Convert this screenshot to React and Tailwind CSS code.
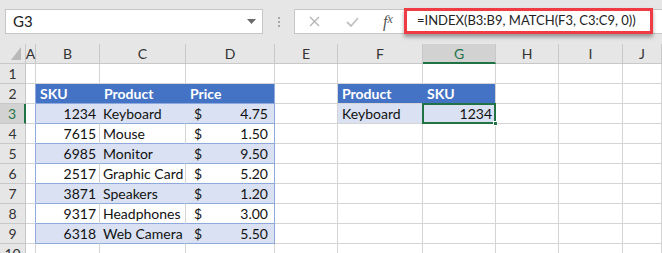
import React from 'react';

const colLetters = ['A', 'B', 'C', 'D', 'E', 'F', 'G', 'H', 'I', 'J'];

const data = [
  [1234, 'Keyboard', '4.75'],
  [7615, 'Mouse', '1.50'],
  [6985, 'Monitor', '9.50'],
  [2517, 'Graphic Card', '5.20'],
  [3871, 'Speakers', '1.20'],
  [9317, 'Headphones', '3.00'],
  [6318, 'Web Camera', '5.50'],
];

const cell = 'h-5 border-r border-b border-[#d4d4d4] bg-white overflow-hidden whitespace-nowrap flex items-center px-1';

const Toolbar = () => (
  <div className="h-[44px] bg-[#e6e6e6] flex items-start pt-[9px] pl-[5px]">
    {/* name box */}
    <div className="w-[258px] h-[25px] bg-white border border-[#c6c6c6] flex items-center justify-between pl-[7px] pr-[6px] text-[15px] text-[#222]">
      <span>G3</span>
      <svg width="9" height="5" viewBox="0 0 9 5"><polygon points="0,0 9,0 4.5,5" fill="#6a6a6a" /></svg>
    </div>
    <div className="w-[31px] h-[25px] flex flex-col items-center justify-center gap-[2px]">
      <span className="w-[2px] h-[2px] bg-[#a8a8a8]" />
      <span className="w-[2px] h-[2px] bg-[#a8a8a8]" />
      <span className="w-[2px] h-[2px] bg-[#a8a8a8]" />
    </div>
    {/* formula bar */}
    <div className="flex-1 h-[25px] bg-white border border-[#c6c6c6] border-r-0 flex items-center">
      <div className="w-[38px] flex justify-center">
        <svg width="11" height="11" viewBox="0 0 11 11"><path d="M1 1 L10 10 M10 1 L1 10" stroke="#b4b4b4" strokeWidth="1.4" /></svg>
      </div>
      <div className="w-[38px] flex justify-center">
        <svg width="13" height="10" viewBox="0 0 13 10"><path d="M1 5 L5 9 L12 1" stroke="#c2c2c2" strokeWidth="1.8" fill="none" /></svg>
      </div>
      <div className="w-[34px] flex justify-center text-[#555] italic" style={{ fontFamily: '"Liberation Serif", serif' }}>
        <span className="text-[16px]">f</span><span className="text-[12px]">x</span>
      </div>
      <div className="ml-[-1px] -mt-[1px] w-[249px] h-[26px] shrink-0 border-[3px] border-[#ee3b44] bg-white shadow-[0_3px_4px_rgba(0,0,0,0.35)] flex items-center pl-[10px] text-[13px] text-[#222] whitespace-nowrap overflow-hidden">
        =INDEX(B3:B9, MATCH(F3, C3:C9, 0))
      </div>
    </div>
  </div>
);

const ColHeader = () => (
  <>
    <div className="h-5 bg-[#e6e6e6] border-r border-b border-[#c8c8c8] flex items-end justify-end pr-[4px] pb-[3px]">
      <svg width="10" height="13" viewBox="0 0 10 13"><polygon points="10,0 10,13 0,13" fill="#b9b9b9" /></svg>
    </div>
    {colLetters.map((c) =>
      c === 'G' ? (
        <div key={c} className="h-5 bg-[#d2d2d2] border-r border-[#c8c8c8] border-b-2 border-b-[#217346] flex items-center justify-center text-[#217346]">{c}</div>
      ) : (
        <div key={c} className="h-5 bg-[#e6e6e6] border-r border-b border-[#c8c8c8] flex items-center justify-center text-[#333]">{c}</div>
      )
    )}
  </>
);

const RowHead = ({ n }) =>
  n === 3 ? (
    <div className="h-5 bg-[#d2d2d2] border-b border-[#c8c8c8] border-r-2 border-r-[#217346] flex items-center justify-center text-[#217346]">{n}</div>
  ) : (
    <div className="h-5 bg-[#e6e6e6] border-r border-b border-[#c8c8c8] flex items-center justify-center text-[#333]">{n}</div>
  );

const Empty = ({ n }) => (
  <>
    {Array.from({ length: n }).map((_, i) => (
      <div key={i} className={cell} />
    ))}
  </>
);

const Row1 = () => (
  <>
    <RowHead n={1} />
    <Empty n={10} />
  </>
);

const Row2 = () => (
  <>
    <RowHead n={2} />
    <div className="h-5 bg-white border-b border-[#d4d4d4] border-r border-r-[#8ea9db]" />
    <div className="h-5 bg-[#4472c4] border-b border-[#8ea9db] flex items-center px-1 font-bold text-white">SKU</div>
    <div className="h-5 bg-[#4472c4] border-b border-[#8ea9db] flex items-center px-1 font-bold text-white">Product</div>
    <div className="h-5 bg-[#4472c4] border-b border-[#8ea9db] border-r border-r-[#8ea9db] flex items-center px-1 font-bold text-white">Price</div>
    <div className={cell} />
    <div className="h-5 bg-[#4472c4] border-b border-[#d4d4d4] flex items-center px-1 font-bold text-white">Product</div>
    <div className="h-5 bg-[#4472c4] border-b border-[#d4d4d4] border-r border-r-[#d4d4d4] flex items-center px-1 font-bold text-white">SKU</div>
    <Empty n={3} />
  </>
);

const DataRow = ({ n, sku, product, price }) => {
  const band = n % 2 === 1;
  const bg = band ? 'bg-[#d9e1f2]' : 'bg-white';
  const inner = band ? 'border-r-[#d9e1f2]' : 'border-r-[#d4d4d4]';
  return (
    <>
      <RowHead n={n} />
      <div className="h-5 bg-white border-b border-[#d4d4d4] border-r border-r-[#8ea9db]" />
      <div className={`h-5 ${bg} border-b border-[#8ea9db] border-r ${inner} flex items-center justify-end px-[3px]`}>{sku}</div>
      <div className={`h-5 ${bg} border-b border-[#8ea9db] border-r ${inner} flex items-center px-[3px] whitespace-nowrap`}>{product}</div>
      <div className={`h-5 ${bg} border-b border-[#8ea9db] border-r border-r-[#8ea9db] flex items-center justify-between pl-[8px] pr-[6px]`}>
        <span>$</span>
        <span>{price}</span>
      </div>
      {n === 3 ? (
        <>
          <div className={cell} />
          <div className="h-5 bg-[#d9e1f2] border-b border-[#d4d4d4] flex items-center px-1">Keyboard</div>
          <div className="h-5 relative bg-[#d9e1f2] border-b border-r border-[#d4d4d4]">
            <div className="absolute -left-px -top-px right-[-1px] bottom-[-1px] border-2 border-[#217346] flex items-center justify-end pr-[2px]">1234</div>
            <div className="absolute right-[-3px] bottom-[-3px] w-[5px] h-[5px] bg-[#217346] border border-white" />
          </div>
          <Empty n={3} />
        </>
      ) : (
        <Empty n={6} />
      )}
    </>
  );
};

export default function App() {
  return (
    <div className="w-[662px] h-[253px] overflow-hidden bg-white text-[14px] text-[#111]" style={{ fontFamily: 'Lato, "Liberation Sans", sans-serif' }}>
      <Toolbar />
      <div className="grid grid-cols-[26px_10px_64px_86px_89px_63px_85px_73px_63px_64px_1fr]">
        <ColHeader />
        <Row1 />
        <Row2 />
        {data.map((d, i) => (
          <DataRow key={i} n={i + 3} sku={d[0]} product={d[1]} price={d[2]} />
        ))}
        <RowHead n={10} />
        <Empty n={10} />
      </div>
    </div>
  );
}
